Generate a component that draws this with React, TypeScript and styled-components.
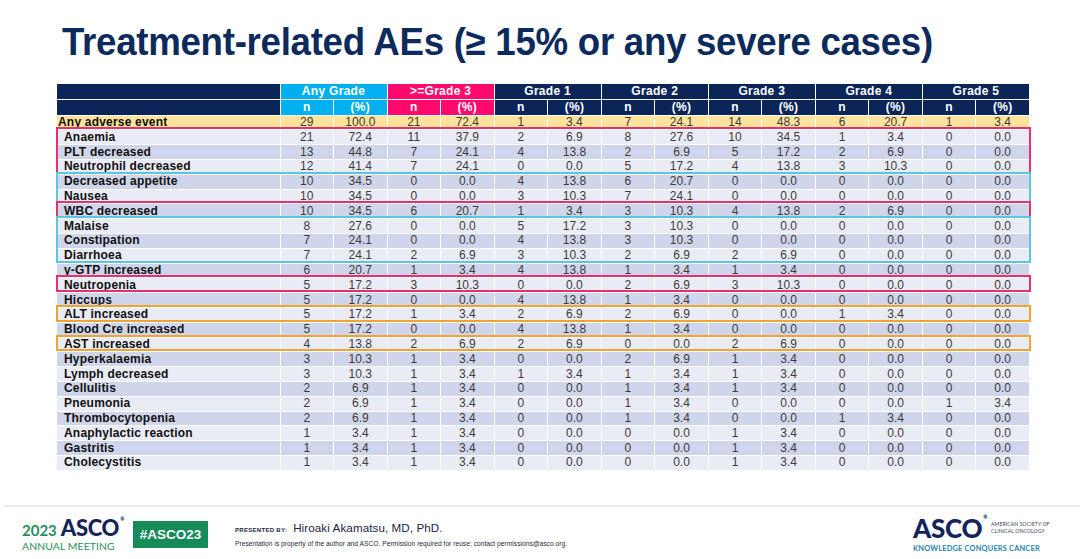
import React from "react"
import styled, { createGlobalStyle } from "styled-components"

const GlobalStyle = createGlobalStyle`
  html, body {
    margin: 0;
    padding: 0;
    background: #ffffff;
  }
  body {
    font-family: "Liberation Sans", Arial, sans-serif;
  }
`

type Row = {
  label: string
  values: [number, string][]
}

const raw: [string, string][] = [
  ["Any adverse event", "29 100.0 21 72.4 1 3.4 7 24.1 14 48.3 6 20.7 1 3.4"],
  ["Anaemia", "21 72.4 11 37.9 2 6.9 8 27.6 10 34.5 1 3.4 0 0.0"],
  ["PLT decreased", "13 44.8 7 24.1 4 13.8 2 6.9 5 17.2 2 6.9 0 0.0"],
  ["Neutrophil decreased", "12 41.4 7 24.1 0 0.0 5 17.2 4 13.8 3 10.3 0 0.0"],
  ["Decreased appetite", "10 34.5 0 0.0 4 13.8 6 20.7 0 0.0 0 0.0 0 0.0"],
  ["Nausea", "10 34.5 0 0.0 3 10.3 7 24.1 0 0.0 0 0.0 0 0.0"],
  ["WBC decreased", "10 34.5 6 20.7 1 3.4 3 10.3 4 13.8 2 6.9 0 0.0"],
  ["Malaise", "8 27.6 0 0.0 5 17.2 3 10.3 0 0.0 0 0.0 0 0.0"],
  ["Constipation", "7 24.1 0 0.0 4 13.8 3 10.3 0 0.0 0 0.0 0 0.0"],
  ["Diarrhoea", "7 24.1 2 6.9 3 10.3 2 6.9 2 6.9 0 0.0 0 0.0"],
  ["γ-GTP increased", "6 20.7 1 3.4 4 13.8 1 3.4 1 3.4 0 0.0 0 0.0"],
  ["Neutropenia", "5 17.2 3 10.3 0 0.0 2 6.9 3 10.3 0 0.0 0 0.0"],
  ["Hiccups", "5 17.2 0 0.0 4 13.8 1 3.4 0 0.0 0 0.0 0 0.0"],
  ["ALT increased", "5 17.2 1 3.4 2 6.9 2 6.9 0 0.0 1 3.4 0 0.0"],
  ["Blood Cre increased", "5 17.2 0 0.0 4 13.8 1 3.4 0 0.0 0 0.0 0 0.0"],
  ["AST increased", "4 13.8 2 6.9 2 6.9 0 0.0 2 6.9 0 0.0 0 0.0"],
  ["Hyperkalaemia", "3 10.3 1 3.4 0 0.0 2 6.9 1 3.4 0 0.0 0 0.0"],
  ["Lymph decreased", "3 10.3 1 3.4 1 3.4 1 3.4 1 3.4 0 0.0 0 0.0"],
  ["Cellulitis", "2 6.9 1 3.4 0 0.0 1 3.4 1 3.4 0 0.0 0 0.0"],
  ["Pneumonia", "2 6.9 1 3.4 0 0.0 1 3.4 0 0.0 0 0.0 1 3.4"],
  ["Thrombocytopenia", "2 6.9 1 3.4 0 0.0 1 3.4 0 0.0 1 3.4 0 0.0"],
  ["Anaphylactic reaction", "1 3.4 1 3.4 0 0.0 0 0.0 1 3.4 0 0.0 0 0.0"],
  ["Gastritis", "1 3.4 1 3.4 0 0.0 0 0.0 1 3.4 0 0.0 0 0.0"],
  ["Cholecystitis", "1 3.4 1 3.4 0 0.0 0 0.0 1 3.4 0 0.0 0 0.0"],
]

const rows: Row[] = raw.map(([label, s]) => {
  const parts = s.split(" ")
  const values: [number, string][] = []
  for (let i = 0; i < parts.length; i += 2) values.push([Number(parts[i]), parts[i + 1]])
  return { label, values }
})

const groups = [
  { name: "Any Grade", bg: "#00b0f0" },
  { name: ">=Grade 3", bg: "#ff0a6c" },
  { name: "Grade 1", bg: "#0b2558" },
  { name: "Grade 2", bg: "#0b2558" },
  { name: "Grade 3", bg: "#0b2558" },
  { name: "Grade 4", bg: "#0b2558" },
  { name: "Grade 5", bg: "#0b2558" },
]

// highlighted blocks: first body row index, row count, colour
const boxes = [
  { start: 1, count: 3, color: "#e8306c" },
  { start: 4, count: 2, color: "#5cc6e2" },
  { start: 6, count: 1, color: "#e8306c" },
  { start: 7, count: 3, color: "#5cc6e2" },
  { start: 11, count: 1, color: "#e8306c" },
  { start: 13, count: 1, color: "#f2a431" },
  { start: 15, count: 1, color: "#f2a431" },
]

const ROW_H = 14.8
const HEAD_H = ROW_H * 2

const Slide = styled.div`
  width: 1080px;
  height: 559px;
  display: flex;
  flex-direction: column;
  background: #ffffff;
  overflow: hidden;
`

const Title = styled.h1`
  margin: 0;
  padding: 21px 0 0 62px;
  height: 62px;
  box-sizing: border-box;
  font-family: "Liberation Sans", Arial, sans-serif;
  font-size: 38px;
  font-weight: 700;
  color: #0c2a5c;
  white-space: nowrap;
  transform: scaleX(0.965);
  transform-origin: 62px 0;
  letter-spacing: -0.3px;
`

const TableWrap = styled.div`
  position: relative;
  margin: 22px 0 0 57px;
  width: 973px;
`

const Table = styled.table`
  width: 973px;
  table-layout: fixed;
  border-collapse: collapse;
  font-family: "Liberation Sans", Arial, sans-serif;
  font-size: 12px;
`

const HeadCell = styled.th<{ $bg: string }>`
  height: ${ROW_H}px;
  padding: 0;
  background: ${(p) => p.$bg};
  color: #ffffff;
  font-weight: 700;
  line-height: 13px;
  text-align: center;
  border: 1px solid #ffffff;
  border-top: none;
  letter-spacing: 0.3px;
`

const BodyRow = styled.tr<{ $tone: "yellow" | "light" | "dark" }>`
  height: ${ROW_H}px;
  background: ${(p) =>
    p.$tone === "yellow" ? "#fde39b" : p.$tone === "light" ? "#e9ebf5" : "#cfd5ea"};
`

const LabelCell = styled.td<{ $first?: boolean }>`
  padding: 0 0 0 ${(p) => (p.$first ? 1 : 7)}px;
  font-weight: 700;
  color: #111111;
  line-height: 13px;
  white-space: nowrap;
  border: 1px solid #ffffff;
  border-left: none;
  letter-spacing: 0.2px;
`

const NumCell = styled.td`
  padding: 0;
  text-align: center;
  color: #3c3c3c;
  line-height: 13px;
  border: 1px solid #ffffff;
`

const Box = styled.div<{ $top: number; $height: number; $color: string }>`
  position: absolute;
  left: -1px;
  right: -1px;
  top: ${(p) => p.$top}px;
  height: ${(p) => p.$height}px;
  border: 2px solid ${(p) => p.$color};
  box-sizing: border-box;
  pointer-events: none;
`

const Spacer = styled.div`
  flex: 1;
`

const Footer = styled.footer`
  height: 54px;
  border-top: 2px solid #ececec;
  margin-left: 3px;
  display: flex;
  align-items: center;
  padding: 2px 40px 0 19px;
  box-sizing: border-box;
`

const MeetingLogo = styled.div`
  display: flex;
  flex-direction: column;
  width: 92px;
  font-family: Lato, "Noto Sans", sans-serif;
  white-space: nowrap;
`

const LogoTop = styled.div`
  display: flex;
  align-items: baseline;
  gap: 4px;
  line-height: 20px;
`

const Year = styled.span`
  color: #2a8d5e;
  font-size: 15px;
  font-weight: 700;
`

const AscoWord = styled.span<{ $size: number }>`
  color: #14245a;
  font-family: Lato, "Noto Sans", sans-serif;
  font-size: ${(p) => p.$size}px;
  font-weight: 900;
  letter-spacing: -0.3px;
  line-height: 1;
`

const Reg = styled.sup`
  font-size: 5px;
  color: #14245a;
  vertical-align: top;
  margin-left: 1px;
`

const Meeting = styled.span`
  color: #2a8d5e;
  font-size: 10.4px;
  letter-spacing: 0.1px;
  line-height: 12px;
`

const Hashtag = styled.div`
  margin-left: 19px;
  width: 75px;
  height: 27px;
  background: #158b5a;
  color: #ffffff;
  font-family: "Liberation Sans", Arial, sans-serif;
  font-weight: 700;
  font-size: 13.5px;
  display: flex;
  align-items: center;
  justify-content: center;
`

const Presenter = styled.div`
  margin-left: 27px;
  display: flex;
  flex-direction: column;
  gap: 6px;
  font-family: "Liberation Sans", Arial, sans-serif;
`

const PresenterLine = styled.div`
  display: flex;
  align-items: baseline;
  gap: 6px;
`

const PresentedBy = styled.span`
  font-size: 6px;
  font-weight: 700;
  letter-spacing: 0.3px;
  color: #1c2340;
`

const Name = styled.span`
  font-size: 11.6px;
  color: #1c2340;
  letter-spacing: 0.1px;
`

const Notice = styled.span`
  font-size: 6.7px;
  color: #2a2a3a;
  white-space: nowrap;
`

const SocietyLogo = styled.div`
  margin-left: auto;
  width: 127px;
  display: flex;
  flex-direction: column;
  gap: 3px;
`

const SocietyTop = styled.div`
  display: flex;
  align-items: center;
  gap: 4px;
  white-space: nowrap;
`

const SocietyName = styled.div`
  font-family: Lato, "Noto Sans", sans-serif;
  font-size: 5.1px;
  line-height: 7px;
  color: #3a3f55;
  letter-spacing: 0.1px;
`

const Tagline = styled.div`
  font-family: Lato, "Noto Sans", sans-serif;
  font-size: 7.4px;
  font-weight: 700;
  color: #2585b0;
  letter-spacing: 0.2px;
  white-space: nowrap;
`

export default function App() {
  return (
    <>
      <GlobalStyle />
      <Slide>
        <Title>Treatment-related AEs (≥ 15% or any severe cases)</Title>
        <TableWrap>
          <Table>
            <colgroup>
              <col style={{ width: 223 }} />
              {Array.from({ length: 14 }).map((_, i) => (
                <col key={i} />
              ))}
            </colgroup>
            <thead>
              <tr>
                <HeadCell $bg="#0b2558" style={{ borderLeft: "none" }} />
                {groups.map((g) => (
                  <HeadCell key={g.name} $bg={g.bg} colSpan={2}>
                    {g.name}
                  </HeadCell>
                ))}
              </tr>
              <tr>
                <HeadCell $bg="#0b2558" style={{ borderLeft: "none" }} />
                {groups.map((g) => (
                  <React.Fragment key={g.name}>
                    <HeadCell $bg={g.bg}>n</HeadCell>
                    <HeadCell $bg={g.bg}>(%)</HeadCell>
                  </React.Fragment>
                ))}
              </tr>
            </thead>
            <tbody>
              {rows.map((r, i) => (
                <BodyRow key={r.label} $tone={i === 0 ? "yellow" : i % 2 === 1 ? "light" : "dark"}>
                  <LabelCell $first={i === 0}>{r.label}</LabelCell>
                  {r.values.map(([n, pct], j) => (
                    <React.Fragment key={j}>
                      <NumCell>{n}</NumCell>
                      <NumCell>{pct}</NumCell>
                    </React.Fragment>
                  ))}
                </BodyRow>
              ))}
            </tbody>
          </Table>
          {boxes.map((b) => (
            <Box
              key={b.start}
              $top={HEAD_H + b.start * ROW_H - 1}
              $height={b.count * ROW_H + 2}
              $color={b.color}
            />
          ))}
        </TableWrap>
        <Spacer />
        <Footer>
          <MeetingLogo>
            <LogoTop>
              <Year>2023</Year>
              <AscoWord $size={22}>
                ASCO<Reg>®</Reg>
              </AscoWord>
            </LogoTop>
            <Meeting>ANNUAL MEETING</Meeting>
          </MeetingLogo>
          <Hashtag>#ASCO23</Hashtag>
          <Presenter>
            <PresenterLine>
              <PresentedBy>PRESENTED BY:</PresentedBy>
              <Name>Hiroaki Akamatsu, MD, PhD.</Name>
            </PresenterLine>
            <Notice>
              Presentation is property of the author and ASCO. Permission required for reuse; contact
              permissions@asco.org.
            </Notice>
          </Presenter>
          <SocietyLogo>
            <SocietyTop>
              <AscoWord $size={26}>
                ASCO<Reg>®</Reg>
              </AscoWord>
              <SocietyName>
                AMERICAN SOCIETY OF
                <br />
                CLINICAL ONCOLOGY
              </SocietyName>
            </SocietyTop>
            <Tagline>KNOWLEDGE CONQUERS CANCER</Tagline>
          </SocietyLogo>
        </Footer>
      </Slide>
    </>
  )
}
